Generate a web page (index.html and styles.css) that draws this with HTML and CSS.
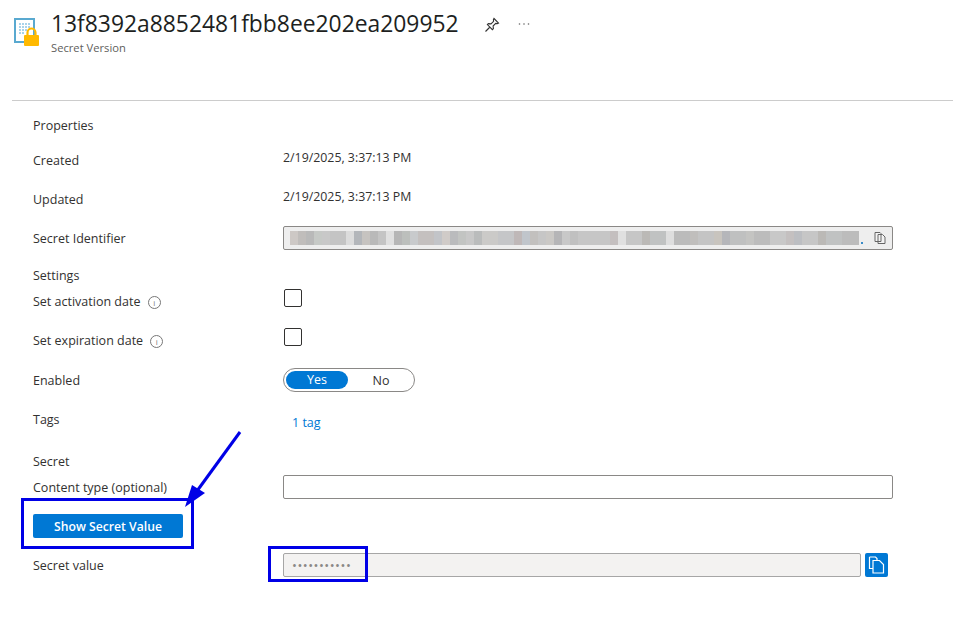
FILE: index.html
```html
<!DOCTYPE html>
<html lang="en">
<head>
  <meta charset="UTF-8">
  <title>Secret Version</title>
  <link rel="stylesheet" href="styles.css">
</head>
<body>

  <div class="header">
    <svg class="vault-icon" width="28" height="30" viewBox="0 0 28 30">
      <rect x="1" y="2" width="19" height="23" fill="#fff" stroke="#59a9d0" stroke-width="2"/>
      <path d="M5 6h2v2H5zM8 6h2v2H8zM11 6h2v2h-2zM14 6h2v2h-2zM5 9h2v2H5zM8 9h2v2H8zM11 9h2v2h-2zM14 9h2v2h-2zM5 12h2v2H5zM8 12h2v2H8zM11 12h2v2h-2zM5 15h2v2H5zM8 15h2v2H8z" fill="#a9d3ea"/>
      <path d="M13.500 18v-2.500a4 4 0 0 1 8 0v2.500" fill="none" stroke="#ffb900" stroke-width="2.200"/>
      <rect x="10" y="18" width="15" height="11" rx="1" fill="#ffb900"/>
    </svg>
    <div class="header-text">
      <h1>13f8392a8852481fbb8ee202ea209952</h1>
      <p>Secret Version</p>
    </div>
    <svg class="pin" width="16" height="16" viewBox="0 0 16 16">
      <path d="M10 1.500l4.500 4.500-1.200.6-1.600-.2-2.600 2.600.3 2.600-1 1-5-5 1-1 2.600.3 2.600-2.600-.2-1.600zM5.500 10.500L1.500 14.500" fill="none" stroke="#333" stroke-width="1.100"/>
    </svg>
    <svg class="more" width="12" height="4" viewBox="0 0 12 4">
      <circle cx="1.500" cy="2" r=".8" fill="#666"/>
      <circle cx="6" cy="2" r=".8" fill="#666"/>
      <circle cx="10.500" cy="2" r=".8" fill="#666"/>
    </svg>
  </div>

  <div class="divider"></div>

  <div class="form">
    <div class="section">Properties</div>

    <div class="label label-plain">Created</div>
    <div class="value">2/19/2025, 3:37:13 PM</div>

    <div class="label label-plain">Updated</div>
    <div class="value">2/19/2025, 3:37:13 PM</div>

    <div class="label">Secret Identifier</div>
    <div class="field field-disabled">
      <div class="blurred"></div>
      <span class="blur-dot"></span>
      <svg class="copy-small" width="14" height="14" viewBox="0 0 14 14">
        <path d="M2 1.500h5l1 1v8H2zM5 3.500h4.500l2.500 2.500v6.500H5z" fill="#f3f3f3" stroke="#666" stroke-width="1"/>
      </svg>
    </div>

    <div class="section">Settings</div>

    <div class="label">Set activation date <span class="info">i</span></div>
    <div><div class="checkbox"></div></div>

    <div class="label">Set expiration date <span class="info">i</span></div>
    <div><div class="checkbox"></div></div>

    <div class="label">Enabled</div>
    <div class="toggle">
      <span class="toggle-on">Yes</span>
      <span class="toggle-off">No</span>
    </div>

    <div class="label">Tags</div>
    <div class="tag-link">1 tag</div>

    <div class="section">Secret</div>

    <div class="label">Content type (optional)</div>
    <div class="field"></div>

    <div class="button-cell"><button class="show-button">Show Secret Value</button></div>

    <div class="label">Secret value</div>
    <div class="secret-row">
      <div class="field field-secret">•••••••••••</div>
      <div class="copy-button">
        <svg width="17" height="18" viewBox="0 0 17 18">
          <path d="M1.500 1h6l1.500 1.500v2.500M1.500 1v11.500h3.500" fill="none" stroke="#fff" stroke-width="1.200"/>
          <path d="M5 4.500h6.500l4 4v8.500H5z" fill="none" stroke="#fff" stroke-width="1.200"/>
        </svg>
      </div>
    </div>
  </div>

  <!-- annotations drawn on top of the screenshot -->
  <svg class="annotations" width="953" height="632" viewBox="0 0 953 632">
    <rect x="22.500" y="499.500" width="170" height="48" fill="none" stroke="#0000e6" stroke-width="3"/>
    <rect x="269.500" y="547.500" width="97" height="33" fill="none" stroke="#0000e6" stroke-width="3"/>
    <path d="M240 432L197 491" fill="none" stroke="#0000e6" stroke-width="3"/>
    <path d="M185 507L192 485L205 493z" fill="#0000e6"/>
  </svg>

</body>
</html>
```

FILE: styles.css
```css
body {
  font-family: "Open Sans", "Noto Sans", Arial, sans-serif;
  font-size: 12.5px;
  color: #323130;
  margin: 0;
  background-color: #fff;
  position: relative;
  height: 632px;
  overflow: hidden;
}

.header {
  display: flex;
  align-items: flex-start;
  height: 100px;
  padding-left: 14px;
  box-sizing: border-box;
}

.vault-icon {
  margin-top: 17px;
  margin-right: 9px;
}

.header-text {
  margin-top: 8px;
}

.header-text h1 {
  font-size: 22.850px;
  font-weight: 400;
  line-height: 32px;
  margin: 0;
  color: #201f1e;
}

.header-text p {
  font-size: 11.200px;
  line-height: 16px;
  margin: 0;
  color: #605e5c;
}

.pin {
  margin-top: 17px;
  margin-left: 25px;
}

.more {
  margin-top: 22px;
  margin-left: 18px;
}

.divider {
  height: 1px;
  margin-left: 12px;
  background-color: #ccc;
}

.form {
  display: grid;
  grid-template-columns: 250px 610px;
  grid-template-rows: 35px 39px 37px 39px 24px 39px 40px 39px 44px 24px 39px 39px 24px;
  padding: 14px 0 0 33px;
}

.section {
  grid-column: 1 / 3;
  padding-top: 1px;
  line-height: 20px;
}

.label {
  line-height: 20px;
  padding-top: 3px;
}

.label-plain {
  padding-top: 1px;
}

.value {
  padding-top: 1px;
  font-size: 12.350px;
  line-height: 14px;
}

.info {
  display: inline-block;
  width: 11px;
  height: 11px;
  margin-left: 4px;
  border: 1px solid #777;
  border-radius: 50%;
  font-size: 8px;
  line-height: 11px;
  text-align: center;
  color: #777;
}

.field {
  height: 24px;
  box-sizing: border-box;
  border: 1px solid #8a8886;
  border-radius: 2px;
  background-color: #fff;
}

.field-disabled {
  display: flex;
  align-items: center;
  background-color: #eee;
  padding-left: 6px;
  position: relative;
}

.blurred {
  width: 569px;
  height: 14px;
  background-image: linear-gradient(90deg,
    #cdc8c5 0 8px, #c0bdbb 8px 16px, #b9b9b9 16px 24px, #c6c9c6 24px 32px, #c8c8c8 32px 40px, #c4c4c4 40px 56px,
    #dcdcdc 56px 64px, #b3b6ba 64px 72px, #c6c3c0 72px 80px, #b9b9b9 80px 88px, #c4c4c4 88px 96px, #e0e0e0 96px 104px,
    #b6b6b6 104px 112px, #bcbfbc 112px 120px, #c8cacc 120px 128px, #c4c0bf 128px 144px, #c2c4c8 144px 152px, #d0cbc8 152px 160px,
    #babbbd 160px 168px, #c2c4c2 168px 176px, #c8c8c8 176px 184px, #babcbc 184px 192px, #cbcac8 192px 208px, #c5c6c8 208px 224px,
    #bfb8b8 224px 232px, #c0c5cb 232px 240px, #c2c0be 240px 248px, #c6c6c6 248px 256px, #cac8c5 256px 264px, #b5b5b7 264px 272px,
    #c8c8c8 272px 280px, #c0c0c0 280px 288px, #c6c6c6 288px 320px, #c4bfbf 320px 328px, #e0e0e0 328px 336px,
    #c6c6c6 336px 352px, #bbb9b6 352px 360px, #c0c2c2 360px 376px, #dedede 376px 384px, #bbbbbb 384px 400px, #c0bebc 400px 408px,
    #c4c4c4 408px 424px, #c8c4be 424px 432px, #b5b6ba 432px 440px, #bfc0c0 440px 456px, #c4c4c2 456px 464px, #bcbcbc 464px 480px,
    #c8c8c8 480px 496px, #c4c0c0 496px 504px, #bcbec2 504px 512px, #c6c6c6 512px 528px, #bbb9b6 528px 536px,
    #c0c2c2 536px 552px, #bcbcbc 552px 569px);
}

.blur-dot {
  width: 2px;
  height: 2px;
  margin: 9px 0 0 2px;
  background-color: #3a8cc8;
}

.copy-small {
  position: absolute;
  right: 5px;
  top: 4px;
}

.checkbox {
  width: 18px;
  height: 18px;
  margin-left: 1px;
  box-sizing: border-box;
  border: 1px solid #323130;
  border-radius: 2px;
}

.toggle {
  display: flex;
  align-items: center;
  width: 132px;
  height: 24px;
  box-sizing: border-box;
  padding: 0 2px;
  border: 1px solid #8a8886;
  border-radius: 12px;
}

.toggle-on {
  width: 62px;
  height: 18px;
  line-height: 18px;
  text-align: center;
  color: #fff;
  background-color: #0078d4;
  border-radius: 9px;
}

.toggle-off {
  flex: 1;
  padding-left: 2px;
  text-align: center;
}

.tag-link {
  padding: 6px 0 0 9px;
  line-height: 20px;
  color: #0078d4;
}

.button-cell {
  grid-column: 1 / 3;
}

.show-button {
  display: block;
  width: 150px;
  height: 24px;
  padding: 0;
  border: none;
  border-radius: 2px;
  background-color: #0078d4;
  color: #fff;
  font-family: inherit;
  font-size: 12.200px;
  font-weight: 600;
}

.secret-row {
  display: flex;
  gap: 4px;
}

.field-secret {
  width: 578px;
  padding-left: 8px;
  font-size: 13px;
  line-height: 22px;
  letter-spacing: .5px;
  color: #8a8886;
  background-color: #f3f2f1;
  border-color: #a6a6a6;
}

.copy-button {
  display: flex;
  align-items: center;
  justify-content: center;
  width: 23px;
  height: 24px;
  background-color: #0078d4;
  border-radius: 2px;
}

.annotations {
  position: absolute;
  left: 0;
  top: 0;
}
```
